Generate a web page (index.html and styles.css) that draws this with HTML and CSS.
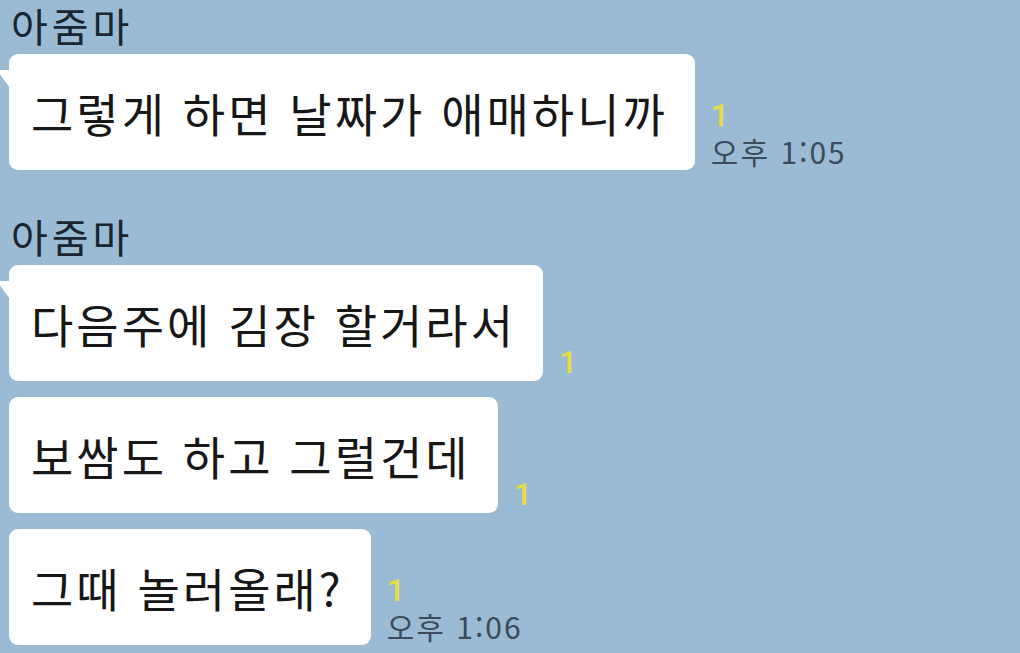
FILE: index.html
```html
<!DOCTYPE html>
<html lang="ko">
<head>
<meta charset="utf-8">
<link rel="stylesheet" href="styles.css">
</head>
<body>
<div class="chat">
  <div class="group">
    <div class="name">아줌마</div>
    <div class="row">
      <div class="bubble tail">그렇게 하면 날짜가 애매하니까</div>
      <div class="meta">
        <span class="unread">1</span>
        <span class="time">오후 1:05</span>
      </div>
    </div>
  </div>
  <div class="group">
    <div class="name">아줌마</div>
    <div class="row">
      <div class="bubble tail">다음주에 김장 할거라서</div>
      <div class="meta">
        <span class="unread">1</span>
      </div>
    </div>
    <div class="row">
      <div class="bubble">보쌈도 하고 그럴건데</div>
      <div class="meta">
        <span class="unread">1</span>
      </div>
    </div>
    <div class="row">
      <div class="bubble">그때 놀러올래?</div>
      <div class="meta">
        <span class="unread">1</span>
        <span class="time">오후 1:06</span>
      </div>
    </div>
  </div>
</div>
</body>
</html>
```

FILE: styles.css
```css
html, body {
  margin: 0;
  padding: 0;
  background: #9bbbd4;
}
body {
  width: 1020px;
  height: 653px;
  overflow: hidden;
  font-family: "Noto Sans CJK KR", "Noto Sans", sans-serif;
}
.chat {
  padding: 0 0 0 9px;
}
.group {
  display: flex;
  flex-direction: column;
}
.group + .group {
  margin-top: 41px;
}
.row + .row {
  margin-top: 16px;
}
.name {
  font-size: 40px;
  line-height: 44px;
  padding-left: 2px;
  letter-spacing: 4px;
  color: #1a2530;
  margin: 3px 0 7px;
}
.row {
  display: flex;
  align-items: flex-end;
}
.bubble {
  position: relative;
  background: #ffffff;
  border-radius: 9px;
  height: 116px;
  box-sizing: border-box;
  padding: 0 27px 0 22px;
  display: flex;
  align-items: center;
  font-size: 46px;
  letter-spacing: 3px;
  color: #171717;
  white-space: nowrap;
}
.tail::before {
  content: "";
  position: absolute;
  left: -9px;
  top: 16px;
  width: 10px;
  height: 18px;
  background: #ffffff;
  clip-path: polygon(0 0, 100% 0, 100% 100%, 0 25%);
}
.meta {
  display: flex;
  flex-direction: column;
  align-items: flex-start;
  margin-left: 16px;
}
.unread {
  font-family: "Roboto", "Noto Sans", sans-serif;
  font-size: 32px;
  font-weight: 500;
  line-height: 34px;
  color: #e7dc42;
  margin-top: -3px;
}
.unread:only-child {
  margin-bottom: 2px;
}
.time {
  font-size: 30px;
  line-height: 38px;
  letter-spacing: 2px;
  color: #3b4b5b;
}
```
